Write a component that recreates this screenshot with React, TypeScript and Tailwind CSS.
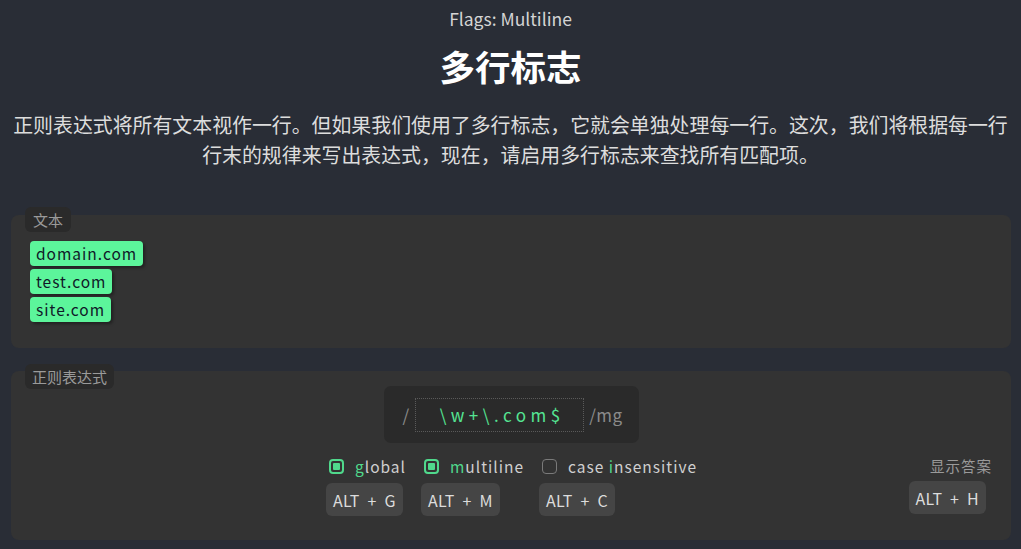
import React from "react";

const font = { fontFamily: '"Noto Sans CJK SC", "Noto Sans", sans-serif' };

function Check({ checked }: { checked: boolean }) {
  return checked ? (
    <div className="w-[15px] h-[15px] rounded-[4px] border-2 border-[#50d98c] p-[2px] flex">
      <div className="flex-1 rounded-[1px] bg-[#50d98c]" />
    </div>
  ) : (
    <div className="w-[15px] h-[15px] rounded-[4px] border-[1.5px] border-[#7a7a7a]" />
  );
}

function Flag({
  checked,
  pre,
  hl,
  post,
  keyName,
}: {
  checked: boolean;
  pre: string;
  hl: string;
  post: string;
  keyName: string;
}) {
  return (
    <div className="flex flex-col items-start">
      <div className="flex items-center h-[20px] pl-[3px] gap-[11px]">
        <Check checked={checked} />
        <span className="text-[15.5px] tracking-[1px] text-[#cfcfcf] leading-[20px]">
          {pre}
          <span className="text-[#50d98c]">{hl}</span>
          {post}
        </span>
      </div>
      <div className="mt-[7px] h-[33px] px-[7px] rounded-[6px] bg-[#454545] flex items-center text-[16px] text-[#dcdcdc] tracking-[0.3px] whitespace-pre">
        {`ALT  +  ${keyName}`}
      </div>
    </div>
  );
}

export default function App() {
  return (
    <div className="min-h-[549px] bg-[#292d36] text-center pb-[8px]" style={font}>
      <div className="pt-[8px] text-[17.5px] leading-[22px] text-[#d4d4d4]">Flags: Multiline</div>
      <h1 className="mt-[14px] text-[35.5px] leading-[44px] font-bold text-white">多行标志</h1>
      <p className="mt-[22px] text-[19.9px] leading-[30px] text-[#dddddd]">
        正则表达式将所有文本视作一行。但如果我们使用了多行标志，它就会单独处理每一行。这次，我们将根据每一行
        <br />
        行末的规律来写出表达式，现在，请启用多行标志来查找所有匹配项。
      </p>

      <div className="relative mx-[11px] mt-[45px] w-[1000px] rounded-[8px] bg-[#333333] pt-[26px] pb-[26px] pl-[19px] text-left">
        <div className="absolute left-[14px] -top-[8px] h-[25px] px-[8px] rounded-[6px] bg-[#2a2a2a] text-[15px] leading-[25px] text-[#9a9a9a]">
          文本
        </div>
        <div className="flex flex-col items-start gap-[3px]">
          {["domain.com", "test.com", "site.com"].map((t) => (
            <div
              key={t}
              className="h-[25px] px-[6px] rounded-[4px] bg-[#5cf59b] text-[15.5px] leading-[25px] tracking-[1px] text-[#101828] shadow-[2px_2px_3px_rgba(0,0,0,0.35)]"
            >
              {t}
            </div>
          ))}
        </div>
      </div>

      <div className="relative mx-[11px] mt-[23px] w-[1000px] rounded-[8px] bg-[#333333] pt-[15px] pb-[24px]">
        <div className="absolute left-[14px] -top-[7px] h-[25px] px-[7px] rounded-[6px] bg-[#2a2a2a] text-[15px] leading-[25px] text-[#9a9a9a]">
          正则表达式
        </div>
        <div className="flex justify-center">
          <div className="w-[255px] h-[57px] rounded-[7px] bg-[#2a2a2a] flex items-center pl-[19px]">
            <span className="text-[17px] text-[#8a8a8a]">/</span>
            <div className="ml-[6px] w-[169px] h-[34px] border border-dotted border-[#5a5a5a] flex items-center justify-center text-[17px] tracking-[4.5px] text-[#55e593] pl-[5px]">
              \w+\.com$
            </div>
            <span className="ml-[5px] text-[17px] tracking-[0.5px] text-[#8a8a8a]">/mg</span>
          </div>
        </div>
        <div className="mt-[13px] grid grid-cols-[1fr_auto_1fr]">
          <div />
          <div className="flex gap-[15px] ml-[1px]">
            <Flag checked pre="" hl="g" post="lobal" keyName="G" />
            <Flag checked pre="" hl="m" post="ultiline" keyName="M" />
            <Flag checked={false} pre="case " hl="i" post="nsensitive" keyName="C" />
          </div>
          <div className="flex flex-col items-end pr-[19px]">
            <div className="text-[14.5px] leading-[20px] tracking-[1px] text-[#9a9a9a]">显示答案</div>
            <div className="mt-[5px] mr-[6px] h-[33px] px-[7px] rounded-[6px] bg-[#454545] flex items-center text-[16px] text-[#dcdcdc] tracking-[0.3px] whitespace-pre">
              {"ALT  +  H"}
            </div>
          </div>
        </div>
      </div>
    </div>
  );
}
